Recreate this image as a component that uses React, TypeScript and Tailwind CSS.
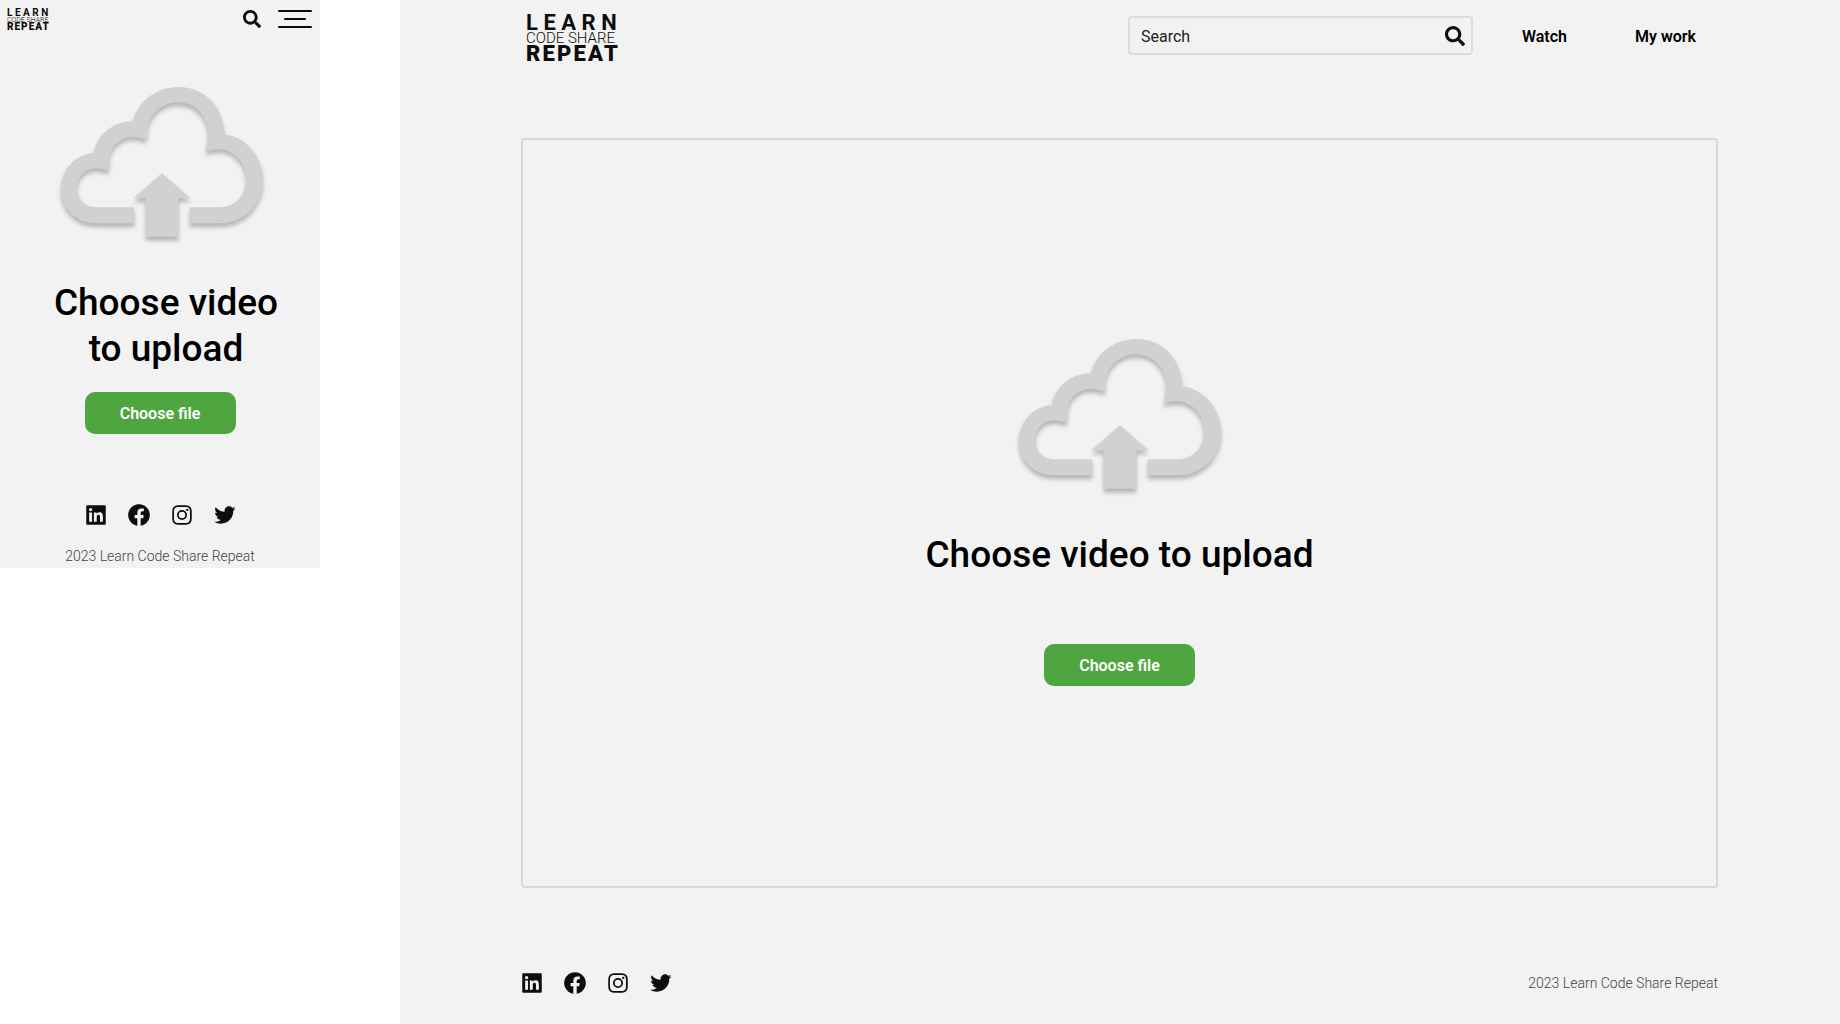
import React from "react";
import { BiLogoLinkedinSquare, BiLogoFacebookCircle, BiLogoInstagram, BiLogoTwitter } from "react-icons/bi";
import { FaSearch } from "react-icons/fa";

const socials = [
  { name: "LinkedIn", Icon: BiLogoLinkedinSquare },
  { name: "Facebook", Icon: BiLogoFacebookCircle },
  { name: "Instagram", Icon: BiLogoInstagram },
  { name: "Twitter", Icon: BiLogoTwitter },
];

function Socials() {
  return (
    <nav aria-label="Social media" className="flex gap-[17px] text-[#0d0d0d]">
      {socials.map(({ name, Icon }) => (
        <a key={name} href="#" aria-label={name}>
          <Icon size={26} />
        </a>
      ))}
    </nav>
  );
}

function CloudUpload() {
  return (
    <svg viewBox="56 56 606 450" className="h-[150px] w-[202px] shrink-0 overflow-visible drop-shadow-[0_4px_2px_rgba(0,0,0,0.25)]" fill="#d1d1d1" aria-hidden="true">
      <path d="M276 465H160C102 465 56 421 56 363C56 303 101 256 155 254C162 201 214 158 272 159C287 98 343 56 409 56C488 56 545 118 546 198C612 205 662 267 662 336C662 408 605 465 534 465H442V417H530C577 417 612 381 612 335C612 284 575 243 530 243C515 243 503 245 490 249C493 236 497 219 497 193C497 142 456 102 406 102C356 102 315 143 315 193C315 200 314 207 311 214C299 209 288 205 272 205C233 205 201 237 201 275C201 288 200 299 199 308C188 303 175 300 160 300C128 300 104 326 104 360C104 392 129 417 160 417H276Z" />
      <path d="M359 314L443 388L441 390H408V505H310V390H277L275 388Z" />
    </svg>
  );
}

function ChooseFile() {
  return (
    <button type="button" className="h-[42px] w-[151px] shrink-0 rounded-[10px] bg-[#4fa640] pt-[2px] text-[16px] leading-6 font-semibold text-white">
      Choose file
    </button>
  );
}

function Desktop() {
  return (
    <section className="flex min-h-screen flex-1 flex-col bg-[#f2f2f2] pr-[122px] pl-[121px]">
      <header className="flex h-[71px] items-center">
        <a href="#" className="ml-[5px] flex flex-col pt-1 text-[#0d0d0d]">
          <span className="text-[22px] leading-[18px] font-bold tracking-[0.25em]">LEARN</span>
          <span className="text-[15px] leading-[13px] font-light">CODE SHARE</span>
          <span className="text-[22px] leading-[17px] font-black tracking-widest">REPEAT</span>
        </a>
        <form className="ml-auto flex h-[39px] w-[345px] items-center rounded-[4px] border-2 border-[#dcdcdc] pr-[6px] pl-[11px]">
          <input type="text" aria-label="Search" placeholder="Search" className="min-w-0 flex-1 bg-transparent pt-[2px] text-[16px] leading-6 text-[#222] outline-none placeholder:text-[#222]" />
          <button type="button" aria-label="Submit search" className="text-[#0d0d0d]">
            <FaSearch size={20} />
          </button>
        </form>
        <nav className="mr-[22px] ml-[49px] flex gap-[68px] pt-[2px] text-[16px] leading-6 font-semibold text-black">
          <a href="#">Watch</a>
          <a href="#">My work</a>
        </nav>
      </header>
      <main className="mt-[67px] flex flex-col items-center rounded-[4px] border-2 border-[#d8d8d8] pt-[199px] pb-[200px]">
        <CloudUpload />
        <h1 className="mt-[43px] text-[37px] leading-[46px] font-medium text-black">Choose video to upload</h1>
        <div className="mt-[66px] flex">
          <ChooseFile />
        </div>
      </main>
      <footer className="mt-[82px] flex items-center justify-between">
        <div className="-ml-[2px]">
          <Socials />
        </div>
        <p className="text-[14px] leading-5 font-light text-[#444]">2023 Learn Code Share Repeat</p>
      </footer>
    </section>
  );
}

function Mobile() {
  return (
    <section className="flex w-[320px] shrink-0 flex-col items-center bg-[#f2f2f2]">
      <header className="flex h-[38px] w-full items-center pr-2 pl-[7px]">
        <a href="#" className="mr-auto flex flex-col text-[#0d0d0d]">
          <span className="text-[10px] leading-[9px] font-bold tracking-[0.25em]">LEARN</span>
          <span className="text-[7px] leading-[6px] font-light">CODE SHARE</span>
          <span className="text-[10px] leading-[8px] font-black tracking-widest">REPEAT</span>
        </a>
        <button type="button" aria-label="Search" className="text-[#0d0d0d]">
          <FaSearch size={18} />
        </button>
        <button type="button" aria-label="Menu" className="ml-[17px] flex w-[34px] flex-col items-center gap-[6px]">
          <span className="h-[2px] w-full rounded-full bg-[#0d0d0d]" />
          <span className="h-[2px] w-[22px] rounded-full bg-[#0d0d0d]" />
          <span className="h-[2px] w-full rounded-full bg-[#0d0d0d]" />
        </button>
      </header>
      <main className="flex w-full flex-col items-center pt-[49px]">
        <div className="flex flex-col items-center pl-1">
          <CloudUpload />
          <h1 className="mt-[43px] pl-2 text-center text-[37px] leading-[46px] font-medium text-black">
            Choose video
            <br />
            to upload
          </h1>
        </div>
        <div className="mt-5 flex">
          <ChooseFile />
        </div>
      </main>
      <footer className="mt-[68px] flex flex-col items-center pb-[2px]">
        <Socials />
        <p className="mt-[18px] text-[14px] leading-5 font-light text-[#444]">2023 Learn Code Share Repeat</p>
      </footer>
    </section>
  );
}

export default function App() {
  return (
    <div className="flex min-h-screen items-start gap-20 bg-white font-['Roboto',sans-serif]">
      <Mobile />
      <Desktop />
    </div>
  );
}
